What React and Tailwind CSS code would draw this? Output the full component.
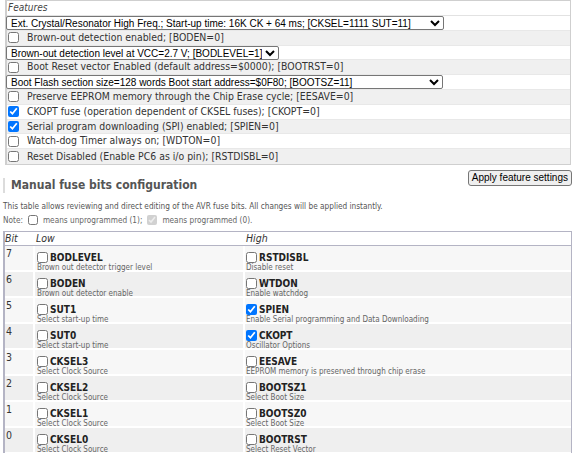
import React from 'react'

const FEATURES = [
  { type: 'select', width: 'w-[438px]', value: 'Ext. Crystal/Resonator High Freq.; Start-up time: 16K CK + 64 ms; [CKSEL=1111 SUT=11]' },
  { type: 'check', label: 'Brown-out detection enabled; [BODEN=0]', checked: false },
  { type: 'select', width: 'w-[273px]', value: 'Brown-out detection level at VCC=2.7 V; [BODLEVEL=1]' },
  { type: 'check', label: 'Boot Reset vector Enabled (default address=$0000); [BOOTRST=0]', checked: false },
  { type: 'select', width: 'w-[437px]', value: 'Boot Flash section size=128 words Boot start address=$0F80; [BOOTSZ=11]' },
  { type: 'check', label: 'Preserve EEPROM memory through the Chip Erase cycle; [EESAVE=0]', checked: false },
  { type: 'check', label: 'CKOPT fuse (operation dependent of CKSEL fuses); [CKOPT=0]', checked: true },
  { type: 'check', label: 'Serial program downloading (SPI) enabled; [SPIEN=0]', checked: true },
  { type: 'check', label: 'Watch-dog Timer always on; [WDTON=0]', checked: false },
  { type: 'check', label: 'Reset Disabled (Enable PC6 as i/o pin); [RSTDISBL=0]', checked: false },
]

const BITS = [
  { bit: 7, low: ['BODLEVEL', 'Brown out detector trigger level', false], high: ['RSTDISBL', 'Disable reset', false] },
  { bit: 6, low: ['BODEN', 'Brown out detector enable', false], high: ['WTDON', 'Enable watchdog', false] },
  { bit: 5, low: ['SUT1', 'Select start-up time', false], high: ['SPIEN', 'Enable Serial programming and Data Downloading', true] },
  { bit: 4, low: ['SUT0', 'Select start-up time', false], high: ['CKOPT', 'Oscillator Options', true] },
  { bit: 3, low: ['CKSEL3', 'Select Clock Source', false], high: ['EESAVE', 'EEPROM memory is preserved through chip erase', false] },
  { bit: 2, low: ['CKSEL2', 'Select Clock Source', false], high: ['BOOTSZ1', 'Select Boot Size', false] },
  { bit: 1, low: ['CKSEL1', 'Select Clock Source', false], high: ['BOOTSZ0', 'Select Boot Size', false] },
  { bit: 0, low: ['CKSEL0', 'Select Clock Source', false], high: ['BOOTRST', 'Select Reset Vector', false] },
]

function FuseCell({ data, className }) {
  const [name, desc, checked] = data
  return (
    <div className={className}>
      <label className="flex items-center gap-[2px] h-[13px] mt-[5px]">
        <input type="checkbox" defaultChecked={checked} className="m-0 w-[11px] h-[11px] accent-[#0075ff]" />
        <span className="text-[10px] font-bold text-[#222]">{name}</span>
      </label>
      <div className="text-[8px] text-[#666] leading-[9px] -mt-[1px]">{desc}</div>
    </div>
  )
}

export default function App() {
  return (
    <div className="w-[577px] h-[453px] overflow-hidden bg-white text-[#333] font-stretch-condensed font-['DejaVu_Sans_Condensed','DejaVu_Sans',sans-serif]">
      <div className="ml-[5px] mr-[6px] border border-[#cfcfcf] border-l-2">
        <div className="h-[15px] border-b border-[#e2e2e2] pl-[1px] text-[10px] italic leading-[14px] text-[#444]">
          Features
        </div>
        {FEATURES.map((f, idx) => (
          <div
            key={idx}
            className={`h-[14.8px] flex items-center border-b border-[#e8e8e8] last:border-b-0 ${idx % 2 ? 'bg-[#f0f0f0]' : 'bg-white'}`}
          >
            {f.type === 'select' ? (
              <select
                defaultValue={f.value}
                className={`${f.width} -ml-[1px] h-[14px] text-[10px] leading-[12px] font-stretch-normal font-['Liberation_Sans',Arial,sans-serif] text-black border border-[#767676] rounded-[2px] px-0 py-0 bg-white`}
              >
                <option>{f.value}</option>
              </select>
            ) : (
              <label className="flex items-center pl-[1px]">
                <input type="checkbox" defaultChecked={f.checked} className="m-0 w-[11px] h-[11px] accent-[#0075ff]" />
                <span className="ml-[8px] text-[10.4px] text-[#333]">{f.label}</span>
              </label>
            )}
          </div>
        ))}
      </div>

      <div className="flex items-start justify-between pl-[3px] pr-[5px]">
        <h2 className="mt-[13px] border-l-2 border-[#dcdcdc] pl-[6px] text-[12px] leading-[15px] font-bold text-[#555]">
          Manual fuse bits configuration
        </h2>
        <button className="mt-[5px] h-[16px] px-[3px] text-[10px] leading-[14px] font-stretch-normal font-['Liberation_Sans',Arial,sans-serif] text-black bg-[#efefef] border border-[#767676] rounded-[3px]">
          Apply feature settings
        </button>
      </div>

      <p className="mt-[8px] pl-[3px] text-[8.2px] leading-[10px] text-[#555]">
        This table allows reviewing and direct editing of the AVR fuse bits. All changes will be applied instantly.
      </p>
      <p className="mt-[4px] pl-[3px] flex items-center text-[8.2px] leading-[10px] text-[#666]">
        Note:
        <input type="checkbox" className="mx-[5px] w-[10px] h-[10px]" readOnly />
        means unprogrammed (1);
        <input type="checkbox" checked disabled readOnly className="mx-[5px] w-[10px] h-[10px]" />
        means programmed (0).
      </p>

      <div className="mt-[6px] ml-[3px] mr-[5px] border border-[#b4b4c4] border-l-2">
        <div className="flex h-[14px] border-b border-[#b4b4c4] text-[10.5px] italic leading-[13px] text-[#333]">
          <div className="w-[30px]">Bit</div>
          <div className="w-[210px] pl-[1px]">Low</div>
          <div className="flex-1 pl-[1px]">High</div>
        </div>
        {BITS.map((row, idx) => (
          <div key={row.bit} className={`flex h-[26px] border-b-2 border-white ${idx % 2 ? 'bg-[#efefef]' : 'bg-[#f7f7f7]'}`}>
            <div className="w-[30px] border-r-2 border-white pl-[1px] text-[10.5px] leading-[14px]">{row.bit}</div>
            <FuseCell data={row.low} className="w-[210px] border-r-2 border-white pl-[2px]" />
            <FuseCell data={row.high} className="flex-1 pl-[1px]" />
          </div>
        ))}
      </div>
    </div>
  )
}
